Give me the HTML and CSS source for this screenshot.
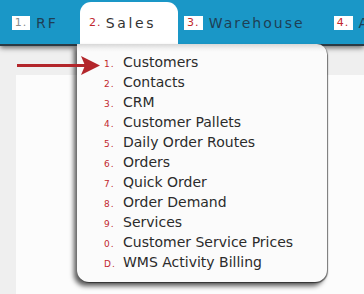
FILE: index.html
```html
<!DOCTYPE html>
<html>
<head>
<meta charset="utf-8">
<link rel="stylesheet" href="styles.css">
</head>
<body>
<div class="header">
  <div class="tab tab-rf"><span class="num gray">1.</span><span class="label">RF</span></div>
  <div class="tab tab-active"><span class="num">2.</span><span class="label">Sales</span></div>
  <div class="tab tab-wh"><span class="num">3.</span><span class="label">Warehouse</span></div>
  <div class="tab tab-4"><span class="num">4.</span><span class="label">A</span></div>
</div>
<div class="main">
  <div class="panel"></div>
</div>
<div class="dropdown">
  <ul class="menu">
    <li><span class="n">1.</span>Customers</li>
    <li><span class="n">2.</span>Contacts</li>
    <li><span class="n">3.</span>CRM</li>
    <li><span class="n">4.</span>Customer Pallets</li>
    <li><span class="n">5.</span>Daily Order Routes</li>
    <li><span class="n">6.</span>Orders</li>
    <li><span class="n">7.</span>Quick Order</li>
    <li><span class="n">8.</span>Order Demand</li>
    <li><span class="n">9.</span>Services</li>
    <li><span class="n">0.</span>Customer Service Prices</li>
    <li><span class="n">D.</span>WMS Activity Billing</li>
  </ul>
</div>
<svg class="arrow" width="90" height="24" viewBox="0 0 90 24">
  <rect x="0" y="10" width="70" height="3" fill="#b3262b"/>
  <polygon points="64,2 83,11.5 64,21 68,11.5" fill="#b3262b"/>
</svg>
</body>
</html>
```
FILE: styles.css
```css
html, body {
  margin: 0;
  padding: 0;
}
body {
  width: 364px;
  height: 294px;
  overflow: hidden;
  background: #efefef;
  font-family: "DejaVu Sans", Verdana, sans-serif;
  position: relative;
}
.header {
  height: 44px;
  background: #1a97c7;
  display: flex;
  align-items: flex-end;
  padding-left: 12px;
  box-shadow: 0 2px 0 #2b3a44, 0 4px 5px rgba(0,0,0,0.55);
  position: relative;
  z-index: 1;
  white-space: nowrap;
  overflow: hidden;
}
.tab {
  display: flex;
  flex-shrink: 0;
  align-items: center;
  height: 42px;
  font-size: 14px;
  letter-spacing: 2px;
  color: #1e3f55;
}
.num {
  display: inline-block;
  background: #fff;
  color: #c1272d;
  font-size: 11px;
  letter-spacing: 1px;
  width: 19px;
  height: 14px;
  line-height: 14px;
  text-align: center;
  margin-right: 6px;
}
.num.gray {
  color: #8a8a8a;
}
.tab-rf .num { width: 18px; }
.tab-active {
  margin-left: 22px;
  width: 98px;
  background: #fff;
  border-radius: 11px 11px 0 0;
  color: #333;
  padding-left: 6px;
  box-sizing: border-box;
  letter-spacing: 2.6px;
}
.tab-active .num {
  margin-right: 1px;
}
.tab-wh {
  margin-left: 6px;
}
.tab-4 {
  margin-left: 29px;
}
.main {
  padding: 31px 0 0 16px;
  height: 219px;
}
.panel {
  background: #fcfcfc;
  height: 100%;
}
.dropdown {
  position: absolute;
  left: 77px;
  top: 44px;
  width: 250px;
  height: 238px;
  background: #fbfbfb linear-gradient(#d8d8d8, #f4f4f4 5px, #fbfbfb 8px);
  border-radius: 0 10px 12px 12px;
  box-shadow: -3px 4px 5px rgba(0,0,0,0.65), 1px 1px 1px rgba(0,0,0,0.5);
  z-index: 2;
}
.menu {
  list-style: none;
  margin: 0;
  padding: 8px 0 0 27px;
}
.menu li {
  height: 20px;
  line-height: 20px;
  font-size: 14px;
  color: #2b2b2b;
  white-space: nowrap;
}
.n {
  display: inline-block;
  width: 19px;
  font-size: 9px;
  color: #c1272d;
  letter-spacing: 1px;
}
.arrow {
  position: absolute;
  left: 17px;
  top: 54px;
  z-index: 3;
}
```
